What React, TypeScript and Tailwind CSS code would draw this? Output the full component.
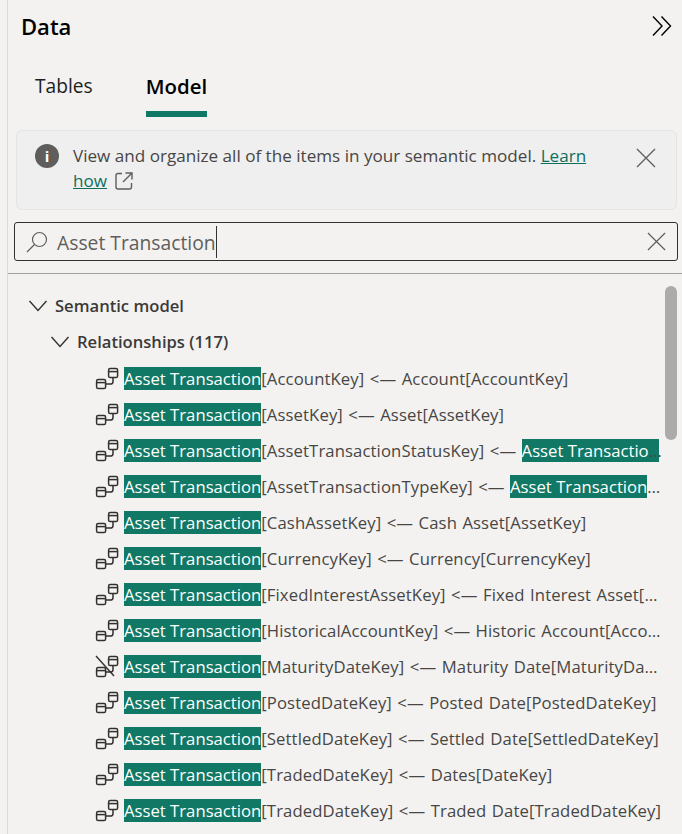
import { Fragment } from "react";

const font = "font-['Open_Sans','Noto_Sans',sans-serif]";

type Part = { text: string; hit?: boolean };

const hit = "Asset Transaction";

const rows: { parts: Part[]; inactive?: boolean }[] = [
  { parts: [{ text: hit, hit: true }, { text: "[AccountKey] <— Account[AccountKey]" }] },
  { parts: [{ text: hit, hit: true }, { text: "[AssetKey] <— Asset[AssetKey]" }] },
  { parts: [{ text: hit, hit: true }, { text: "[AssetTransactionStatusKey] <— " }, { text: "Asset Transaction", hit: true }, { text: "Status[AssetTransactionStatusKey]" }] },
  { parts: [{ text: hit, hit: true }, { text: "[AssetTransactionTypeKey] <— " }, { text: "Asset Transaction", hit: true }, { text: "Type[AssetTransactionTypeKey]" }] },
  { parts: [{ text: hit, hit: true }, { text: "[CashAssetKey] <— Cash Asset[AssetKey]" }] },
  { parts: [{ text: hit, hit: true }, { text: "[CurrencyKey] <— Currency[CurrencyKey]" }] },
  { parts: [{ text: hit, hit: true }, { text: "[FixedInterestAssetKey] <— Fixed Interest Asset[AssetKey]" }] },
  { parts: [{ text: hit, hit: true }, { text: "[HistoricalAccountKey] <— Historic Account[AccountKey]" }] },
  { parts: [{ text: hit, hit: true }, { text: "[MaturityDateKey] <— Maturity Date[MaturityDateKey]" }], inactive: true },
  { parts: [{ text: hit, hit: true }, { text: "[PostedDateKey] <— Posted Date[PostedDateKey]" }] },
  { parts: [{ text: hit, hit: true }, { text: "[SettledDateKey] <— Settled Date[SettledDateKey]" }] },
  { parts: [{ text: hit, hit: true }, { text: "[TradedDateKey] <— Dates[DateKey]" }] },
  { parts: [{ text: hit, hit: true }, { text: "[TradedDateKey] <— Traded Date[TradedDateKey]" }] },
];

function Chevron() {
  return (
    <svg width="20" height="14" viewBox="0 0 20 14" fill="none" stroke="#323130" strokeWidth="1.4" className="shrink-0">
      <path d="M1.5 2L10 11.5L18.5 2" />
    </svg>
  );
}

function Cross({ size, color }: { size: number; color: string }) {
  return (
    <svg width={size} height={size} viewBox="0 0 20 20" fill="none" stroke={color} strokeWidth="1.3" className="shrink-0">
      <path d="M1 1L19 19M19 1L1 19" />
    </svg>
  );
}

function RelationshipIcon({ inactive }: { inactive?: boolean }) {
  return (
    <svg width="24" height="24" viewBox="0 0 24 24" fill="none" stroke="#323130" strokeWidth="1.5" className="shrink-0">
      <rect x="13.6" y="2.6" width="9" height="9" rx="1.6" />
      <path d="M13.6 5.6H22.6" />
      <rect x="1.6" y="13.6" width="9" height="9" rx="1.6" />
      <path d="M1.6 16.6H10.6" />
      <path d="M10.6 18H15.4Q18 18 18 15.4V11.6" />
      {inactive && <path d="M1 2L19 22" strokeWidth="1.4" />}
    </svg>
  );
}

export default function App() {
  return (
    <div className={`${font} relative w-[682px] h-[834px] overflow-hidden bg-[#f3f2f1] text-[#323130]`}>
      <div className="ml-[7px] h-full border-l border-[#dcdad8]">
        <div className="flex items-center justify-between pl-[13px] pr-[10px] pt-[9px] h-[42px]">
          <h1 className="text-[22px] font-semibold text-black leading-[30px]">Data</h1>
          <svg width="20" height="22" viewBox="0 0 20 22" fill="none" stroke="#000" strokeWidth="1.4" className="shrink-0">
            <path d="M1 1.5L10 11L1 20.5M9.5 1.5L18.5 11L9.5 20.5" />
          </svg>
        </div>
        <div className="flex gap-[53px] pl-[27px] mt-[27px] h-[48px]">
          <div className="text-[19.2px] leading-[34px] text-[#201f1e]">Tables</div>
          <div className="h-[48px] border-b-[6px] border-[#117865] text-[20.4px] leading-[34px] font-semibold text-black">Model</div>
        </div>
        <div className="ml-[8px] mr-[5px] mt-[13px] h-[80px] rounded-md border border-[#e5e4e3] bg-[#efefef] flex pl-[18px] pr-[20px] pt-[12px]">
          <div className="w-[24px] h-[24px] mt-[1px] rounded-full bg-[#605e5c] text-white text-[15px] font-bold flex items-center justify-center shrink-0">i</div>
          <p className="ml-[14px] w-[530px] text-[17.1px] leading-[25px] text-[#484644]">
            View and organize all of the items in your semantic model.{" "}
            <span className="text-[#0e6f5f] underline">Learn how</span>
            <svg width="20" height="20" viewBox="0 0 20 20" fill="none" stroke="#605e5c" strokeWidth="1.4" className="inline ml-[7px] -mt-[2px]">
              <path d="M8 2.5H4A2 2 0 0 0 2 4.5V16A2 2 0 0 0 4 18H15.5A2 2 0 0 0 17.5 16V12" />
              <path d="M11.5 2H18V8.5M18 2L9 11" />
            </svg>
          </p>
          <div className="ml-auto mt-[5px]">
            <Cross size={20} color="#605e5c" />
          </div>
        </div>
        <div className="ml-[6px] mr-[4px] mt-[12px] h-[39px] rounded-[3px] border border-[#323130] flex items-center pl-[11px] pr-[11px]">
          <svg width="22" height="22" viewBox="0 0 22 22" fill="none" stroke="#605e5c" strokeWidth="1.2" className="shrink-0">
            <circle cx="13.5" cy="8.5" r="7" />
            <path d="M8.5 13.5L1 21" />
          </svg>
          <span className="ml-[9px] pt-[2px] text-[19.3px] text-[#605e5c] leading-[24px]">Asset Transaction</span>
          <span className="w-px h-[32px] bg-[#323130]" />
          <div className="ml-auto">
            <Cross size={19} color="#605e5c" />
          </div>
        </div>
        <div className="mt-[12px] border-t border-[#a19f9d] h-px" />
        <div className="pt-[14px]">
          <div className="flex items-center h-[36px] pl-[20px] gap-[7px] text-[16.6px] font-semibold text-[#3b3a39]">
            <Chevron />
            Semantic model
          </div>
          <div className="flex items-center h-[36px] pl-[42px] gap-[7px] text-[16.6px] font-semibold text-[#3b3a39]">
            <Chevron />
            Relationships (117)
          </div>
          {rows.map((row, i) => (
            <div key={i} className="flex items-center h-[36px] pl-[87px] pr-[20px] gap-[5px]">
              <RelationshipIcon inactive={row.inactive} />
              <div className="min-w-0 truncate pt-[2px] text-[16.7px] leading-[24px] text-[#484644]">
                {row.parts.map((p, j) => (
                  <Fragment key={j}>
                    {p.hit ? (
                      <span className="bg-[#117865] text-white">{p.text}</span>
                    ) : (
                      <span className="tracking-[0.1px] [word-spacing:1px]">{p.text}</span>
                    )}
                  </Fragment>
                ))}
              </div>
            </div>
          ))}
        </div>
      </div>
      <div className="absolute left-[665px] top-[286px] w-[12px] h-[154px] rounded-full bg-[#ababab]" />
    </div>
  );
}
